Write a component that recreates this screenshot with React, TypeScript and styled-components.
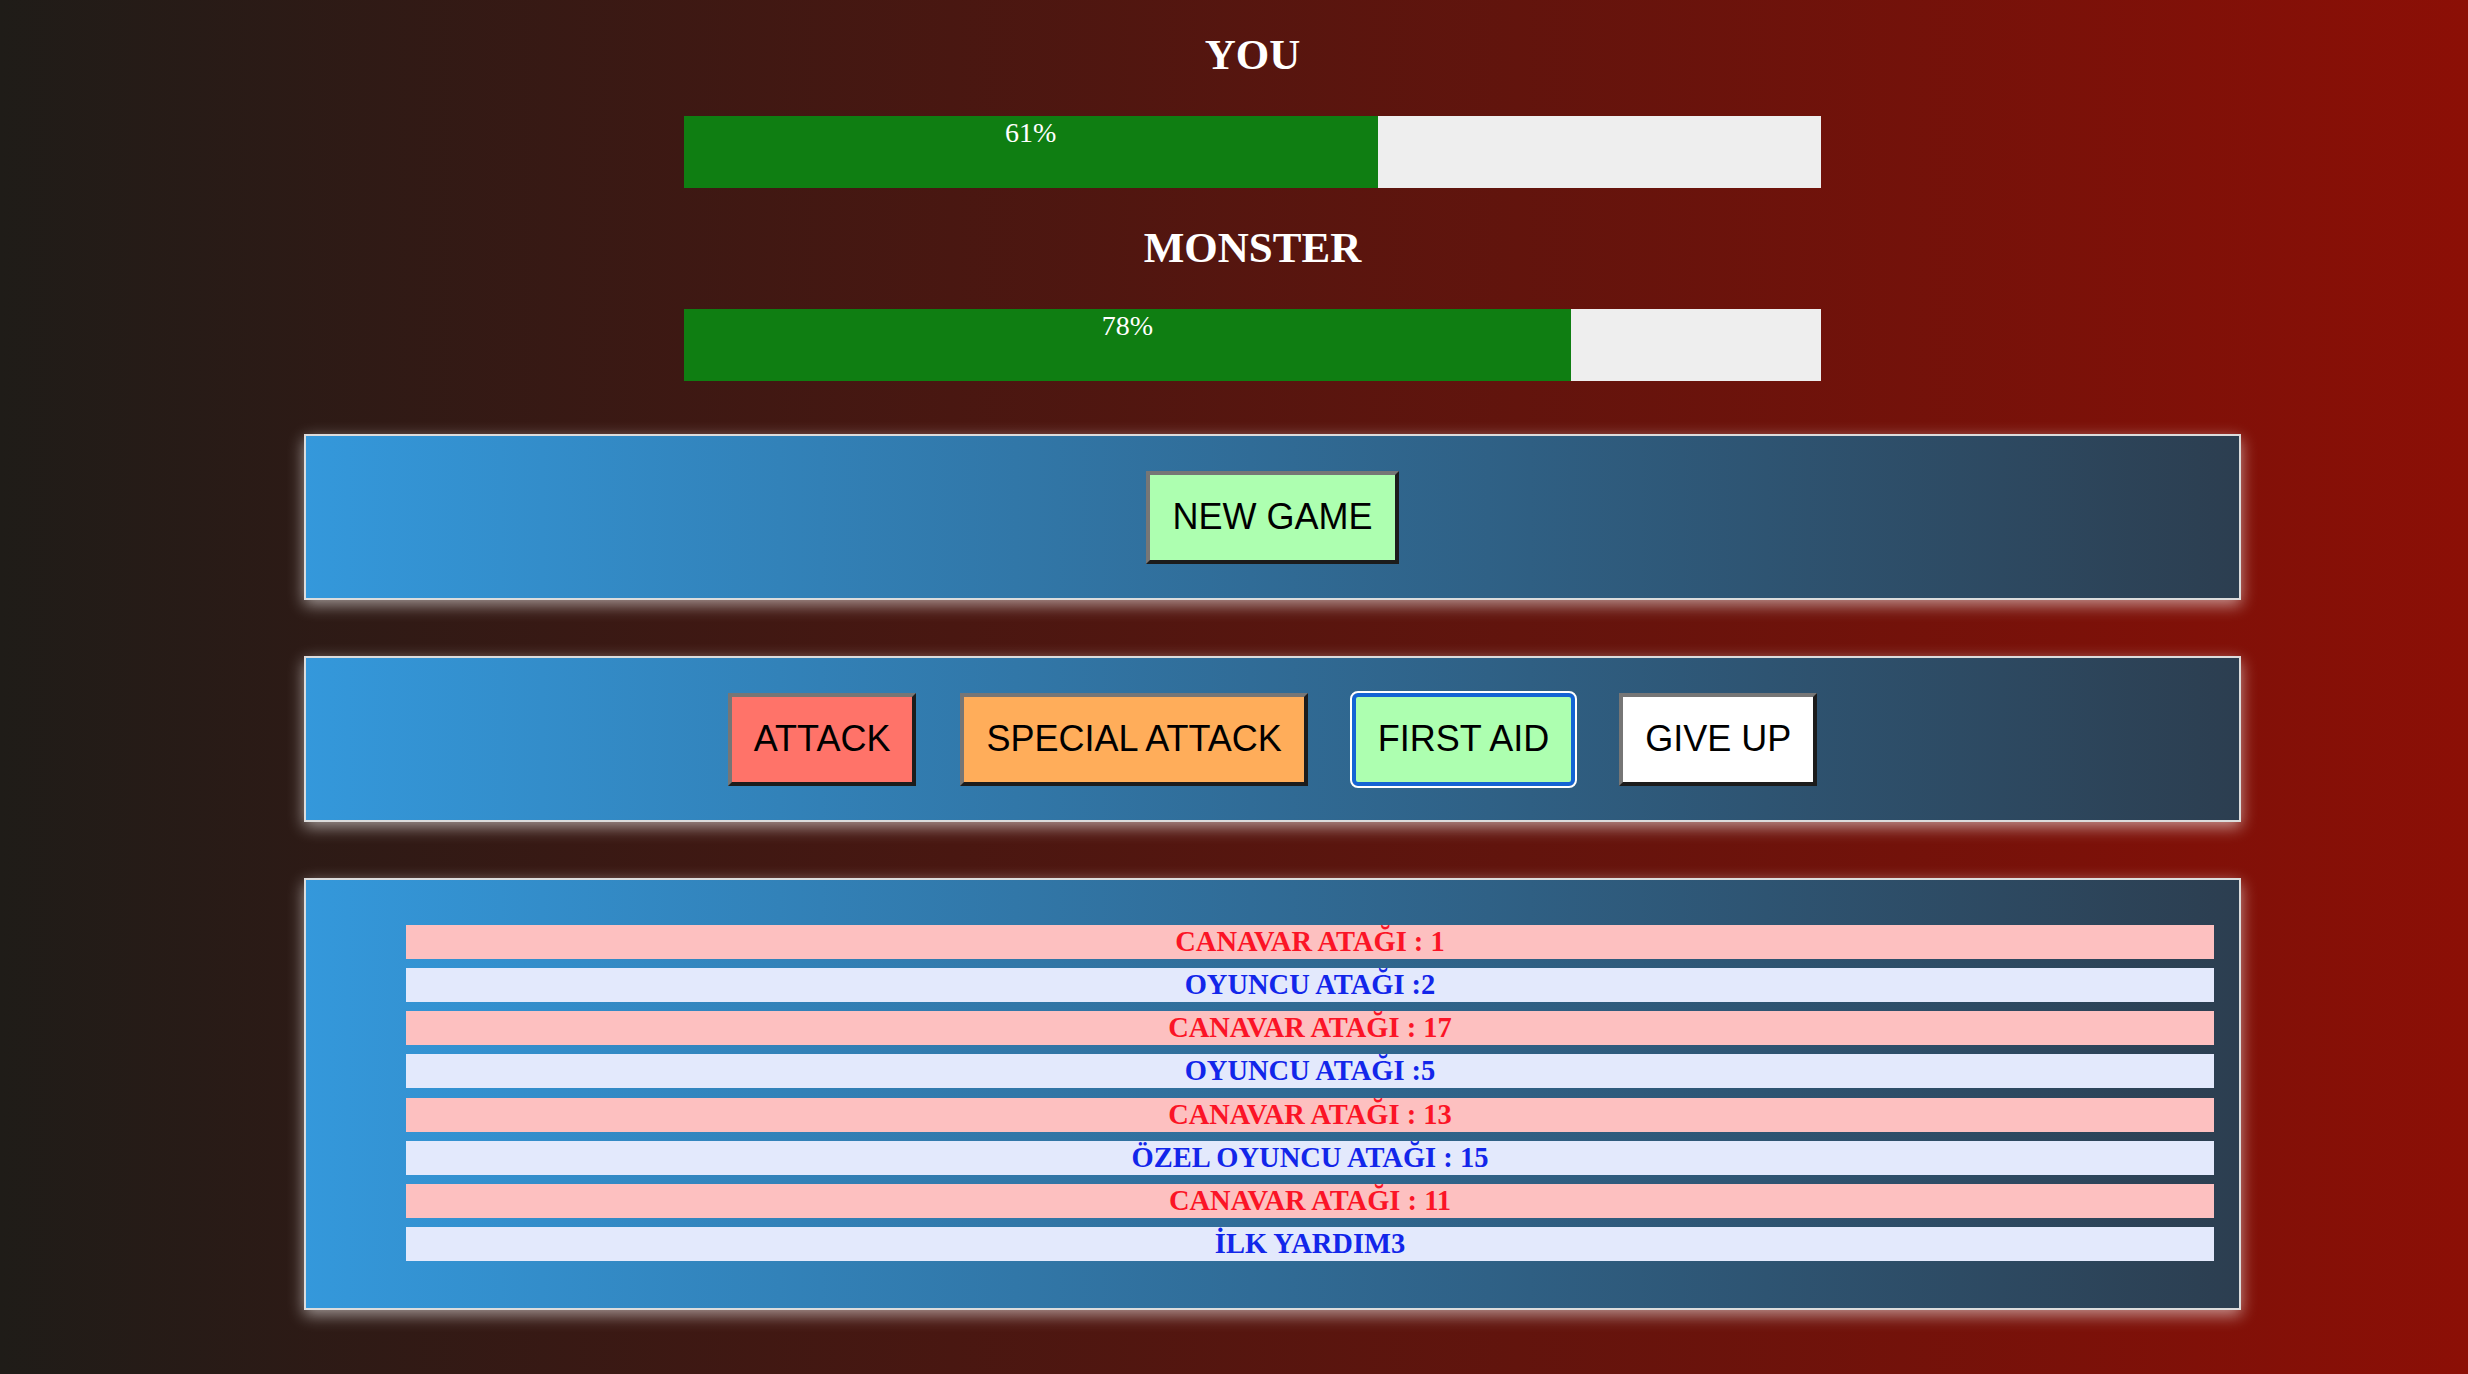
import React from "react";
import styled, { createGlobalStyle } from "styled-components";

const GlobalStyle = createGlobalStyle`
  html, body {
    margin: 0;
    padding: 0;
  }
  body {
    font-family: "Liberation Serif", "Times New Roman", serif;
  }
`;

const Page = styled.div`
  min-height: 100vh;
  box-sizing: border-box;
  padding: 31px 0 40px;
  background: linear-gradient(to right, #1f1c18, #8c0f06);
`;

const Stats = styled.div`
  width: 1137px;
  margin-left: 684px;
  display: flex;
  flex-direction: column;
  gap: 36px;
`;

const Health = styled.section`
  display: flex;
  flex-direction: column;
  gap: 37px;
`;

const Title = styled.h1`
  margin: 0;
  text-align: center;
  color: #fff;
  font-family: "Liberation Serif", "Times New Roman", serif;
  font-weight: bold;
  font-size: 43px;
  line-height: 48px;
`;

const Track = styled.div`
  height: 72px;
  background: #eeeeee;
  display: flex;
`;

const Fill = styled.div`
  height: 100%;
  background: #0f7e12;
  color: #fff;
  text-align: center;
  font-family: "Liberation Serif", "Times New Roman", serif;
  font-size: 28px;
  line-height: 31px;
  padding-top: 1px;
  box-sizing: border-box;
`;

const Panels = styled.div`
  width: 1937px;
  margin: 53px 0 0 304px;
  display: flex;
  flex-direction: column;
  gap: 56px;
`;

const Panel = styled.section`
  box-sizing: border-box;
  border: 2px solid #dcdcdc;
  background: linear-gradient(to right, #3498db, #2c3e50);
  box-shadow: 0 5px 15px rgba(255, 255, 255, 0.55);
  padding: 35px 25px 34px;
`;

const ButtonRow = styled.div`
  display: flex;
  justify-content: center;
  align-items: center;
  gap: 44px;
`;

const GameButton = styled.button<{ $bg: string; $focused?: boolean }>`
  font-family: "Liberation Sans", Arial, sans-serif;
  font-size: 36px;
  line-height: 41px;
  color: #000;
  background: ${(p) => p.$bg};
  padding: 21px 22px 23px;
  margin: 0;
  border-style: solid;
  border-width: 4px;
  border-color: ${(p) =>
    p.$focused ? "#1464d4" : "#767676 #1c1c1c #1c1c1c #767676"};
  border-radius: ${(p) => (p.$focused ? "6px" : "0")};
  outline: ${(p) => (p.$focused ? "2px solid #ffffff" : "none")};
  outline-offset: 0;
  cursor: pointer;
`;

const LogList = styled.ul`
  list-style: none;
  margin: 10px 0 13px;
  padding: 0 0 0 75px;
  display: flex;
  flex-direction: column;
  gap: 9.14px;
`;

const LogItem = styled.li<{ $monster: boolean }>`
  height: 34px;
  line-height: 33px;
  text-align: center;
  font-family: "Liberation Serif", "Times New Roman", serif;
  font-weight: bold;
  font-size: 28.5px;
  background: ${(p) => (p.$monster ? "#fdc0c0" : "#e3e9fc")};
  color: ${(p) => (p.$monster ? "#fb1426" : "#1226ea")};
`;

const logs = [
  { monster: true, text: "CANAVAR ATAĞI : 1" },
  { monster: false, text: "OYUNCU ATAĞI :2" },
  { monster: true, text: "CANAVAR ATAĞI : 17" },
  { monster: false, text: "OYUNCU ATAĞI :5" },
  { monster: true, text: "CANAVAR ATAĞI : 13" },
  { monster: false, text: "ÖZEL OYUNCU ATAĞI : 15" },
  { monster: true, text: "CANAVAR ATAĞI : 11" },
  { monster: false, text: "İLK YARDIM3" },
];

const bars = [
  { name: "YOU", value: 61 },
  { name: "MONSTER", value: 78 },
];

export default function App() {
  return (
    <>
      <GlobalStyle />
      <Page>
        <Stats>
          {bars.map((b) => (
            <Health key={b.name}>
              <Title>{b.name}</Title>
              <Track>
                <Fill style={{ width: `${b.value}%` }}>{b.value}%</Fill>
              </Track>
            </Health>
          ))}
        </Stats>
        <Panels>
          <Panel>
            <ButtonRow>
              <GameButton $bg="#adffb0">NEW GAME</GameButton>
            </ButtonRow>
          </Panel>
          <Panel>
            <ButtonRow>
              <GameButton $bg="#ff7369">ATTACK</GameButton>
              <GameButton $bg="#ffad5a">SPECIAL ATTACK</GameButton>
              <GameButton $bg="#adffb0" $focused>
                FIRST AID
              </GameButton>
              <GameButton $bg="#ffffff">GIVE UP</GameButton>
            </ButtonRow>
          </Panel>
          <Panel>
            <LogList>
              {logs.map((l, i) => (
                <LogItem key={i} $monster={l.monster}>
                  {l.text}
                </LogItem>
              ))}
            </LogList>
          </Panel>
        </Panels>
      </Page>
    </>
  );
}
